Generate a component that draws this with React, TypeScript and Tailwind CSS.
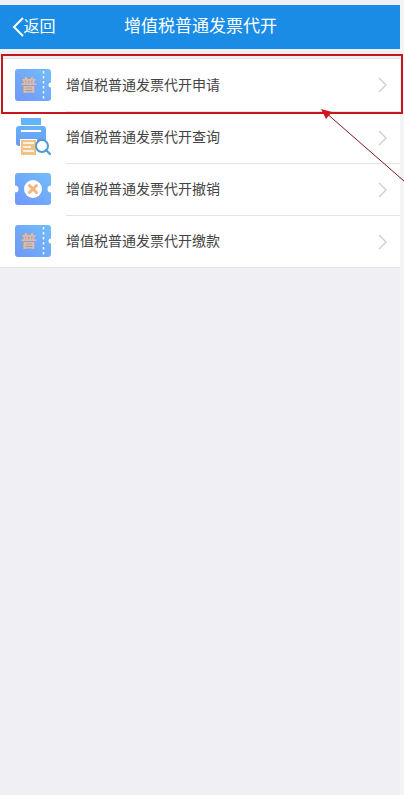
const FONT = "font-['Liberation_Sans','Noto_Sans_CJK_SC',sans-serif]";

function TicketIcon({ id }: { id: string }) {
  return (
    <svg width="36" height="32" viewBox="0 0 36 32">
      <defs>
        <linearGradient id={id} x1="0" y1="1" x2="1" y2="0">
          <stop offset="0" stopColor="#6f98f8" />
          <stop offset="1" stopColor="#72bdfb" />
        </linearGradient>
      </defs>
      <path d="M3 0H33a3 3 0 0 1 3 3V13.5a2.5 2.5 0 0 0 0 5V29a3 3 0 0 1-3 3H3a3 3 0 0 1-3-3V3a3 3 0 0 1 3-3Z" fill={`url(#${id})`} />
      <path d="M28.5 2V30" stroke="#fff" strokeOpacity="0.9" strokeWidth="1.5" strokeDasharray="2.5 2.5" />
      <text x="13.5" y="21.5" textAnchor="middle" fontSize="16" fontWeight="700" fill="#ecb890" fontFamily="'Noto Sans CJK SC',sans-serif">普</text>
    </svg>
  );
}

function PrintIcon() {
  return (
    <svg width="36" height="38" viewBox="0 0 36 38">
      <defs>
        <linearGradient id="pr" x1="0" y1="0" x2="0" y2="1">
          <stop offset="0" stopColor="#62b4f6" />
          <stop offset="1" stopColor="#6f98f8" />
        </linearGradient>
      </defs>
      <rect x="6" y="0" width="20" height="7" fill="#62b4f6" />
      <rect x="1" y="8" width="30" height="20" rx="3" fill="url(#pr)" />
      <rect x="6" y="12" width="20" height="2" fill="#fff" />
      <rect x="5" y="21" width="17" height="17" fill="#fff" />
      <rect x="6" y="22" width="15" height="15" fill="#f2c184" />
      <path d="M8 25H19M8 29H16M8 33H19" stroke="#fff" strokeWidth="1.4" />
      <circle cx="27" cy="28" r="6" fill="#fff" stroke="#4f9bd8" strokeWidth="2" />
      <path d="M31 32L35 36" stroke="#4f9bd8" strokeWidth="2.2" strokeLinecap="round" />
    </svg>
  );
}

function CancelIcon() {
  return (
    <svg width="36" height="32" viewBox="0 0 36 32">
      <defs>
        <linearGradient id="cx" x1="0" y1="1" x2="1" y2="0">
          <stop offset="0" stopColor="#6f98f8" />
          <stop offset="1" stopColor="#72bdfb" />
        </linearGradient>
      </defs>
      <path d="M3 0H33a3 3 0 0 1 3 3V12.5a3.5 3.5 0 0 0 0 7V29a3 3 0 0 1-3 3H3a3 3 0 0 1-3-3V19.5a3.5 3.5 0 0 0 0-7V3a3 3 0 0 1 3-3Z" fill="url(#cx)" />
      <circle cx="18" cy="16" r="9" fill="#fff" />
      <path d="M14.5 12.5L21.5 19.5M21.5 12.5L14.5 19.5" stroke="#f2b67e" strokeWidth="3" strokeLinecap="round" />
    </svg>
  );
}

const ROWS = [
  { label: "增值税普通发票代开申请", icon: <TicketIcon id="tk1" /> },
  { label: "增值税普通发票代开查询", icon: <PrintIcon /> },
  { label: "增值税普通发票代开撤销", icon: <CancelIcon /> },
  { label: "增值税普通发票代开缴款", icon: <TicketIcon id="tk2" /> },
];

export default function App() {
  return (
    <div className={`relative flex h-[795px] w-[404px] overflow-hidden bg-[#efeff4] ${FONT}`}>
      <div className="flex w-[400px] flex-col pt-[5px]">
        {/* Header */}
        <div className="flex h-[44px] items-center bg-[#1a8ce6] text-white">
          <div className="flex w-[124px] items-center pl-[12px] text-[16px]">
            <svg width="12" height="20" viewBox="0 0 12 20" fill="none" stroke="#fff" strokeWidth="2">
              <path d="M11 1L2 10L11 19" />
            </svg>
            <span className="-ml-[0.5px]">返回</span>
          </div>
          <div className="text-[17px]">增值税普通发票代开</div>
        </div>

        {/* List */}
        <div className="mt-[9px] border-y border-[#e3e3e6] bg-white">
          {ROWS.map((row, i) => (
            <div key={i} className="flex h-[52px] items-center">
              <div className="flex w-[66px] shrink-0 items-center pl-[15px]">{row.icon}</div>
              <div className={`flex h-full flex-1 items-center pr-[13px] ${i > 0 ? "border-t border-[#e3e3e6]" : ""}`}>
                <span className="flex-1 text-[14px] text-[#444]">{row.label}</span>
                <svg width="9" height="16" viewBox="0 0 9 16" fill="none" stroke="#cfcfd3" strokeWidth="1.4">
                  <path d="M1 1L8 8L1 15" />
                </svg>
              </div>
            </div>
          ))}
        </div>
      </div>
      <div className="w-[4px] bg-[#f4f4f6]" />

      {/* Annotation */}
      <div className="absolute left-[1px] top-[54px] h-[60px] w-[402px] border-2 border-[#c8161d]" />
      <svg className="absolute left-[315px] top-[105px]" width="89" height="80" viewBox="0 0 89 80" fill="none">
        <path d="M10 7L89 76" stroke="#7a1a1a" strokeWidth="1" />
        <path d="M6 4L17 7L11 14Z" fill="#d4141c" />
      </svg>
    </div>
  );
}
